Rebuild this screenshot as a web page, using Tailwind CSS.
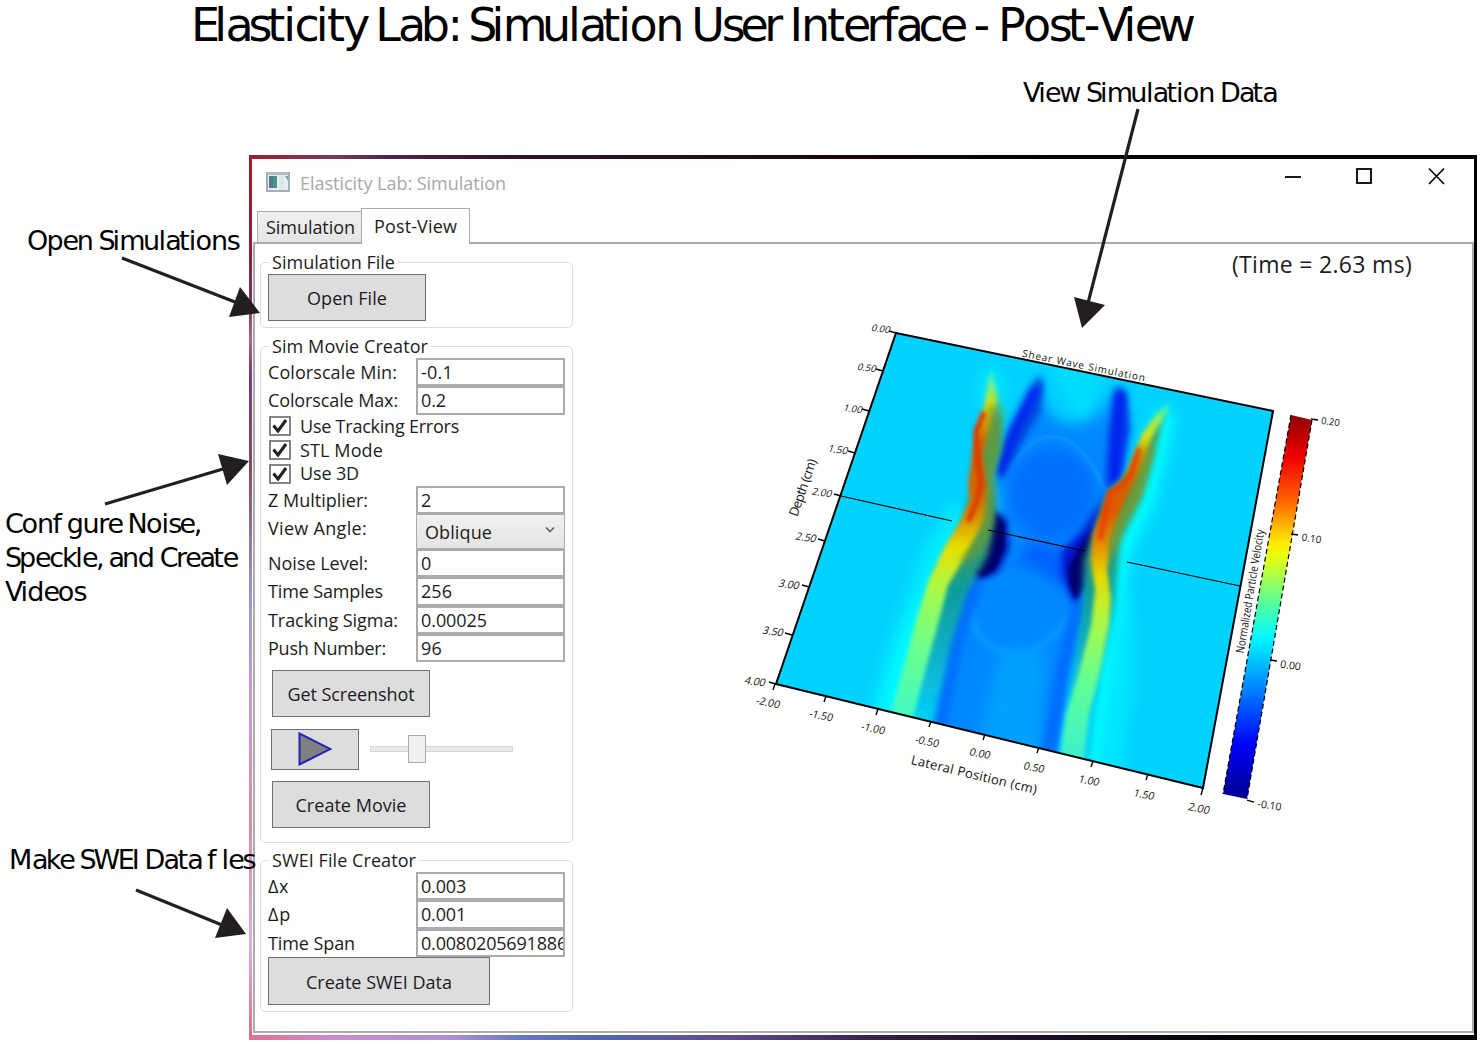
<!DOCTYPE html>
<html lang="en">
<head>
<meta charset="utf-8">
<title>Elasticity Lab: Simulation User Interface - Post-View</title>
<script src="https://cdn.jsdelivr.net/npm/@tailwindcss/browser@4"></script>
</head>
<body class="bg-white">
<main class="relative w-[1482px] h-[1045px] overflow-hidden bg-white font-['Open_Sans',sans-serif] text-[18px] text-[#1c1c1c]">

  <!-- Application window -->
  <section class="absolute left-[249px] top-[155px] w-[1228px] h-[885px] flex flex-col">
    <div class="h-1 shrink-0 bg-[linear-gradient(90deg,#a01c2c_0px,#7a3a5c_80px,#4c2650_140px,#35142c_250px,#20101c_450px,#1c0408_620px,#05070c_720px,#000_800px)]"></div>
    <div class="flex flex-1 min-h-0">
      <div class="w-[3px] shrink-0 bg-[linear-gradient(180deg,#a01c2c_0px,#8a2040_100px,#80305c_140px,#c0607c_180px,#7a3a78_215px,#8a4a60_310px,#9a9ad0_440px,#c89ad0_545px,#e08aa0_670px,#dcb0e0_785px,#e07090_870px)]"></div>
      <div class="flex-1 min-w-0 flex flex-col bg-[#fefefe]">

        <header class="h-[49px] shrink-0 flex items-center pl-[14px] pr-[28px]">
          <svg class="w-6 h-5 shrink-0 mt-[-4px]" viewBox="0 0 24 20">
            <rect x="1" y="1" width="22" height="18" fill="#e9edf2" stroke="#a3adb3" stroke-width="2"/>
            <rect x="1" y="0" width="22" height="3" fill="#b4bcc1"/>
            <rect x="3" y="4" width="8" height="12" fill="#4d9186"/>
            <rect x="3" y="4" width="4" height="12" fill="#4a7d93"/>
            <rect x="13" y="4" width="5" height="13" fill="#dfe5ee"/>
            <path d="M19 4h3v5z" fill="#7cab9c"/>
          </svg>
          <span data-w="206" class="ml-[10px] -mt-px text-[#a8a8a8] whitespace-nowrap">Elasticity Lab: Simulation</span>
          <svg class="ml-auto w-[162px] h-5 mt-[-15px]" viewBox="0 0 162 20" fill="none" stroke="#000" stroke-width="1.8">
            <path d="M1 11h16"/>
            <rect x="73" y="3" width="14" height="14"/>
            <path d="M145 2.500l15 15.500M160 2.500l-15 15.500" stroke-width="1.600"/>
          </svg>
        </header>

        <nav class="h-[34px] shrink-0 flex items-end pl-[5px]">
          <div class="w-[105px] h-[31px] border border-b-0 border-[#acacac] bg-gradient-to-b from-[#f0f0f0] to-[#e5e5e5] flex items-center pl-2"><span data-w="89" class="whitespace-nowrap">Simulation</span></div>
          <div class="relative z-10 w-[109px] h-9 -ml-px -mb-[2px] border-[1.5px] border-b-0 border-[#acacac] bg-white flex items-center pl-3"><span data-w="83" class="whitespace-nowrap">Post-View</span></div>
        </nav>

        <div class="flex-1 min-h-0 ml-px mb-[2px] border-2 border-[#acacac] bg-white flex">
          <aside class="w-[318px] shrink-0 pl-[5px] pt-[6px]">

            <fieldset class="w-[313px] h-[78px] border-[1.5px] border-[#d7dfe3] rounded-[5px] pl-[7px]">
              <legend class="ml-[1px] px-[3px] h-6 leading-6"><span data-w="123" class="whitespace-nowrap">Simulation File</span></legend>
              <button class="w-[158px] h-[47px] border-[1.5px] border-[#707070] bg-[#dddddd] flex items-center justify-center pt-0.5"><span data-w="80" class="whitespace-nowrap">Open File</span></button>
            </fieldset>

            <fieldset class="mt-[6px] w-[313px] h-[509px] border-[1.5px] border-[#d7dfe3] rounded-[5px] pl-[7px] pr-[6px]">
              <legend class="ml-[1px] px-[3px] h-6 leading-6"><span data-w="156" class="whitespace-nowrap">Sim Movie Creator</span></legend>
              <div class="grid grid-cols-[148px_149px] auto-rows-[28.3px] items-center leading-6">
                <span data-w="129" class="justify-self-start whitespace-nowrap">Colorscale Min:</span><div class="h-full border-2 border-[#ababab] bg-white px-[3px] overflow-hidden whitespace-nowrap"><span data-w="32">-0.1</span></div>
                <span data-w="130" class="justify-self-start whitespace-nowrap">Colorscale Max:</span><div class="h-full border-2 border-[#ababab] bg-white px-[3px] overflow-hidden whitespace-nowrap"><span data-w="25">0.2</span></div>
              </div>
              <div class="pl-px">
                <label class="h-[23.700px] flex items-center gap-[9px]"><svg class="w-[22px] h-5" viewBox="0 0 22 20"><rect x="1" y="1" width="20" height="18" fill="#fff" stroke="#707070" stroke-width="1.700"/><path d="M4.500 9.500l4.500 5.500 8-11" fill="none" stroke="#212121" stroke-width="3"/></svg><span data-w="159" class="whitespace-nowrap">Use Tracking Errors</span></label>
                <label class="h-[23.700px] flex items-center gap-[9px]"><svg class="w-[22px] h-5" viewBox="0 0 22 20"><rect x="1" y="1" width="20" height="18" fill="#fff" stroke="#707070" stroke-width="1.700"/><path d="M4.500 9.500l4.500 5.500 8-11" fill="none" stroke="#212121" stroke-width="3"/></svg><span data-w="83" class="whitespace-nowrap">STL Mode</span></label>
                <label class="h-[23.700px] flex items-center gap-[9px]"><svg class="w-[22px] h-5" viewBox="0 0 22 20"><rect x="1" y="1" width="20" height="18" fill="#fff" stroke="#707070" stroke-width="1.700"/><path d="M4.500 9.500l4.500 5.500 8-11" fill="none" stroke="#212121" stroke-width="3"/></svg><span data-w="59" class="whitespace-nowrap">Use 3D</span></label>
              </div>
              <div class="grid grid-cols-[148px_149px] grid-rows-[28.300px_35px_28.300px_28.300px_28.300px_28.300px] items-center leading-6">
                <span data-w="100" class="justify-self-start whitespace-nowrap">Z Multiplier:</span><div class="h-full border-2 border-[#ababab] bg-white px-[3px]"><span data-w="12">2</span></div>
                <span data-w="99" class="justify-self-start whitespace-nowrap -mt-[6px]">View Angle:</span><div class="h-full border-[1.5px] border-[#acacac] bg-gradient-to-b from-[#f0f0f0] to-[#e5e5e5] pl-2 pr-[9px] pt-0.5 flex items-center justify-between"><span data-w="67">Oblique</span><svg class="w-[10px] h-[8px] -mt-1" viewBox="0 0 10 8"><path d="M1 1.500l4 4 4-4" fill="none" stroke="#606060" stroke-width="1.600"/></svg></div>
                <span data-w="100" class="justify-self-start whitespace-nowrap">Noise Level:</span><div class="h-full border-2 border-[#ababab] bg-white px-[3px]"><span data-w="11">0</span></div>
                <span data-w="115" class="justify-self-start whitespace-nowrap">Time Samples</span><div class="h-full border-2 border-[#ababab] bg-white px-[3px]"><span data-w="31">256</span></div>
                <span data-w="130" class="justify-self-start whitespace-nowrap">Tracking Sigma:</span><div class="h-full border-2 border-[#ababab] bg-white px-[3px]"><span data-w="66">0.00025</span></div>
                <span data-w="118" class="justify-self-start whitespace-nowrap">Push Number:</span><div class="h-full border-2 border-[#ababab] bg-white px-[3px]"><span data-w="21">96</span></div>
              </div>
              <div class="pl-1 pt-2">
                <button class="w-[158px] h-[47px] border-[1.5px] border-[#707070] bg-[#dddddd] flex items-center justify-center pt-0.5"><span data-w="127" class="whitespace-nowrap">Get Screenshot</span></button>
                <div class="mt-3 -ml-px flex items-center gap-[11px]">
                  <button class="w-[88px] h-[41px] border-[1.5px] border-[#707070] bg-[#dddddd] flex items-center justify-center"><svg class="w-[34px] h-[34px] -mt-0.5" viewBox="0 0 34 34"><path d="M1.500 1.500v31l31-15.500z" fill="#808080" stroke="#2525b5" stroke-width="2"/></svg></button>
                  <div class="relative -top-px w-[143px] h-[6px] border border-[#d6d6d6] bg-[#e7eaea]"><div class="absolute left-[37px] -top-[12px] w-[18px] h-7 border-[1.5px] border-[#acacac] bg-[#f0f0f0]"></div></div>
                </div>
                <button class="mt-[11px] w-[158px] h-[47px] border-[1.5px] border-[#707070] bg-[#dddddd] flex items-center justify-center pt-0.5"><span data-w="111" class="whitespace-nowrap">Create Movie</span></button>
              </div>
            </fieldset>

            <fieldset class="mt-[5px] w-[313px] h-[164px] border-[1.5px] border-[#d7dfe3] rounded-[5px] pl-[7px] pr-[6px]">
              <legend class="ml-[1px] px-[3px] h-6 leading-6"><span data-w="144" class="whitespace-nowrap">SWEI File Creator</span></legend>
              <div class="grid grid-cols-[148px_149px] auto-rows-[28.300px] items-center leading-6">
                <span data-w="21" class="justify-self-start whitespace-nowrap">Δx</span><div class="h-full border-2 border-[#ababab] bg-white px-[3px]"><span data-w="45">0.003</span></div>
                <span data-w="23" class="justify-self-start whitespace-nowrap">Δp</span><div class="h-full border-2 border-[#ababab] bg-white px-[3px]"><span data-w="45">0.001</span></div>
                <span data-w="87" class="justify-self-start whitespace-nowrap">Time Span</span><div class="h-full border-2 border-[#ababab] bg-white pl-[3px] overflow-hidden whitespace-nowrap"><span data-w="146">0.0080205691886</span></div>
              </div>
              <button class="w-[222px] h-[48px] border-[1.5px] border-[#707070] bg-[#dddddd] flex items-center justify-center pt-[3px]"><span data-w="146" class="whitespace-nowrap">Create SWEI Data</span></button>
            </fieldset>
          </aside>

          <div class="flex-1 min-w-0 flex flex-col">
            <div class="h-11 flex items-center justify-end pr-[60px] pb-[3px]"><span data-w="180" class="text-[23px] whitespace-nowrap">(Time = 2.63 ms)</span></div>

            <!-- Shear wave surface plot -->
            <svg class="w-[660px] h-[540px] ml-[127px]" viewBox="700 288 660 540" font-family="Open Sans, sans-serif" fill="#111">
              <defs>
                <clipPath id="surf"><path d="M896 333L1273 411L1203 788L776 684Z"/></clipPath>
                <filter id="b1" filterUnits="userSpaceOnUse" x="740" y="300" width="570" height="520"><feGaussianBlur stdDeviation="1.300"/></filter>
                <filter id="b2" filterUnits="userSpaceOnUse" x="740" y="300" width="570" height="520"><feGaussianBlur stdDeviation="2"/></filter>
                <filter id="b3" filterUnits="userSpaceOnUse" x="740" y="300" width="570" height="520"><feGaussianBlur stdDeviation="3.500"/></filter>
                <filter id="b6" filterUnits="userSpaceOnUse" x="740" y="300" width="570" height="520"><feGaussianBlur stdDeviation="7"/></filter>
                <linearGradient id="ridgeL" gradientUnits="userSpaceOnUse" x1="0" y1="362" x2="0" y2="720">
                  <stop offset="0" stop-color="#20ffe0" stop-opacity=".2"/><stop offset=".06" stop-color="#90f070" stop-opacity=".8"/><stop offset=".12" stop-color="#d8e010"/><stop offset=".17" stop-color="#d8a000"/><stop offset=".22" stop-color="#d06800"/><stop offset=".36" stop-color="#d06800"/><stop offset=".43" stop-color="#d89000"/><stop offset=".52" stop-color="#e8e000"/><stop offset=".62" stop-color="#b0f840"/><stop offset=".78" stop-color="#70ff88"/><stop offset="1" stop-color="#40f8c8"/>
                </linearGradient>
                <linearGradient id="ridgeR" gradientUnits="userSpaceOnUse" x1="0" y1="400" x2="0" y2="764">
                  <stop offset="0" stop-color="#20ffe0" stop-opacity=".4"/><stop offset=".05" stop-color="#90f060"/><stop offset=".1" stop-color="#d8e010"/><stop offset=".16" stop-color="#d89000"/><stop offset=".23" stop-color="#d06800"/><stop offset=".31" stop-color="#e05800"/><stop offset=".4" stop-color="#e89000"/><stop offset=".48" stop-color="#e8d800"/><stop offset=".6" stop-color="#b0f840"/><stop offset=".78" stop-color="#60ff98"/><stop offset="1" stop-color="#38f0d0"/>
                </linearGradient>
                <linearGradient id="shade" gradientUnits="userSpaceOnUse" x1="0" y1="390" x2="0" y2="720">
                  <stop offset="0" stop-color="#30e0c0" stop-opacity=".5"/><stop offset=".1" stop-color="#509a50"/><stop offset=".45" stop-color="#409860"/><stop offset=".6" stop-color="#109c98"/><stop offset=".8" stop-color="#10b0c8"/><stop offset="1" stop-color="#00d0f8"/>
                </linearGradient>
                <linearGradient id="bar" x1="0" y1="0" x2="0" y2="1">
                  <stop offset="0" stop-color="#900000"/><stop offset=".11" stop-color="#f00000"/><stop offset=".22" stop-color="#ff6000"/><stop offset=".33" stop-color="#ffe800"/><stop offset=".37" stop-color="#e8ff10"/><stop offset=".48" stop-color="#60ff90"/><stop offset=".58" stop-color="#00f8ff"/><stop offset=".68" stop-color="#00a0ff"/><stop offset=".77" stop-color="#0050ff"/><stop offset=".86" stop-color="#0000f8"/><stop offset="1" stop-color="#000090"/>
                </linearGradient>
              </defs>

              <g clip-path="url(#surf)">
                <rect x="770" y="325" width="510" height="470" fill="#00d2ff"/>
                <!-- outer halos -->
                <path d="M990 372L994 420" fill="none" stroke="#00f4ff" stroke-width="20" filter="url(#b6)" opacity=".8"/>
                <path d="M964 510L936 555L905 640L878 730" fill="none" stroke="#00f2ff" stroke-width="26" filter="url(#b6)" opacity=".8"/>
                <path d="M945 590L918 645L895 730" fill="none" stroke="#00ffff" stroke-width="30" filter="url(#b6)"/>
                <path d="M1166 412L1145 500L1120 550L1112 620L1090 780" fill="none" stroke="#00ffff" stroke-width="20" filter="url(#b6)"/>
                <path d="M1118 600L1122 680L1108 790" fill="none" stroke="#00ecff" stroke-width="22" filter="url(#b6)" opacity=".8"/>
                <path d="M1045 350L1082 425L1110 360Z" fill="#00dcff" filter="url(#b3)"/>
                <!-- trough between the two wave fronts -->
                <path d="M1036 385L1050 415Q1080 435 1105 408L1118 385L1128 420L1112 500L1088 560L1084 620L1066 690L1054 790L920 755L945 665L968 590L1000 540L997 478L1012 425Z" fill="#0088ff" filter="url(#b6)"/>
                <ellipse cx="1052" cy="494" rx="44" ry="46" fill="#0070ff" filter="url(#b6)"/>
                <path d="M1000 482Q1040 412 1080 450Q1096 468 1106 492" fill="none" stroke="#0a94ff" stroke-width="4" filter="url(#b2)"/>
                <path d="M1030 540L1072 552L1066 590L1010 575Z" fill="#0064ff" filter="url(#b6)"/>
                <ellipse cx="1018" cy="610" rx="42" ry="45" fill="#0088ff" filter="url(#b6)"/>
                <path d="M968 600Q970 645 1015 655Q1050 650 1068 615" fill="none" stroke="#0a9cff" stroke-width="8" filter="url(#b3)" opacity=".7"/>
                <path d="M1000 650L975 755L1040 775L1045 650Z" fill="#00a0ff" filter="url(#b6)"/>
                <path d="M975 580L955 640L934 740" fill="none" stroke="#006cff" stroke-width="17" filter="url(#b3)"/>
                <path d="M1082 595L1063 670L1046 770" fill="none" stroke="#006cff" stroke-width="14" filter="url(#b3)"/>
                <!-- upper troughs -->
                <path d="M1038 374L1028 400L1005 440L996 486L1008 468L1040 412L1044 383Z" fill="#0048e0" filter="url(#b3)"/>
                <path d="M1036 387L1016 428L999 474" fill="none" stroke="#0020f0" stroke-width="9" filter="url(#b3)"/>
                <path d="M1117 385L1108 440L1106 492L1122 474L1130 430L1126 393Z" fill="#0040e8" filter="url(#b3)"/>
                <path d="M1120 392L1114 484" fill="none" stroke="#0020f0" stroke-width="10" filter="url(#b3)"/>
                <!-- dark pockets -->
                <path d="M990 480L992 510L1006 518L1009 548L998 572L978 580L965 570L985 530Z" fill="#0008b0" filter="url(#b3)"/>
                <path d="M994 512L1005 524L1004 550L994 571L982 577L972 572L988 545Z" fill="#00006c" filter="url(#b2)"/>
                <path d="M1108 492L1084 528L1061 552L1062 575L1073 603L1086 590L1095 540Z" fill="#0018d0" filter="url(#b3)"/>
                <path d="M1094 528L1082 543L1068 566L1069 585L1076 600L1087 582Z" fill="#000070" filter="url(#b2)"/>
                <!-- left front -->
                <path d="M993 378L1004 410L1001 450L991 478L995 520L988 555L968 590L952 640L932 730L908 725L936 590L955 545L975 480Z" fill="url(#shade)" filter="url(#b3)"/>
                <path d="M991 362L984 408L976 430L972 455L968 485L970 500L960 522L944 548L928 582L915 625L903 670L887 725L910 730L924 675L937 628L948 585L968 552L985 520L988 490L983 455L991 425L997 400Z" fill="url(#ridgeL)" filter="url(#b2)"/>
                <path d="M993 405L993 440L990 475L991 505L983 538L963 562" fill="none" stroke="#6f9c30" stroke-width="8" opacity=".75" filter="url(#b3)"/>
                <path d="M984 412L976 432L978 462L981 485L976 503L968 522" fill="none" stroke="#e03000" stroke-width="5" filter="url(#b2)"/>
                <!-- right front -->
                <path d="M1166 405L1155 450L1140 500L1120 540L1114 605L1100 670L1088 775L1060 765L1082 610L1084 560L1104 500L1130 470Z" fill="url(#shade)" filter="url(#b3)"/>
                <path d="M1172 400L1158 412L1142 434L1134 456L1123 480L1109 491L1103 508L1093 535L1091 560L1095 590L1091 625L1078 675L1066 715L1058 770L1082 775L1089 715L1100 672L1109 625L1111 598L1107 570L1112 535L1126 500L1142 468L1152 436L1168 410Z" fill="url(#ridgeR)" filter="url(#b2)"/>
                <path d="M1150 448L1138 492L1119 525L1111 550" fill="none" stroke="#80a028" stroke-width="8" opacity=".85" filter="url(#b3)"/>
                <path d="M1139 448L1131 475L1122 485L1110 493L1105 515L1100 540" fill="none" stroke="#e84000" stroke-width="5" filter="url(#b2)"/>
              </g>

              <g fill="none" stroke="#000">
                <path d="M896 333L1273 411L1203 788L776 684Z" stroke-width="2"/>
                <path d="M841 496L952 521M988 530L1085 551M1127 562L1240 586" stroke-width="1.200"/>
                <path d="M896 333l-7-2M883 371l-7-2M869 411l-7-2M855 453l-7-2M841 496l-7-2M825 541l-7-2M809 587l-7-2M792 635l-7-2M776 684l-7-2M775 684l-2 6M826 696l-2 6M878 709l-2 6M931 721l-2 6M985 734l-2 6M1039 747l-2 6M1093 761l-2 6M1148 774l-2 6M1203 788l-2 7" stroke-width="1.400"/>
              </g>
              <g font-size="10.500" text-anchor="middle">
                <text transform="translate(880 332) rotate(8) skewX(-12)" font-size="9.500">0.00</text>
                <text transform="translate(866 371) rotate(8) skewX(-12)" font-size="9.500">0.50</text>
                <text transform="translate(852 412) rotate(8) skewX(-12)" font-size="9.500">1.00</text>
                <text transform="translate(837 453) rotate(8) skewX(-12)" font-size="10">1.50</text>
                <text transform="translate(821 496) rotate(8) skewX(-12)" font-size="10">2.00</text>
                <text transform="translate(805 541) rotate(8) skewX(-12)">2.50</text>
                <text transform="translate(788 588) rotate(8) skewX(-12)">3.00</text>
                <text transform="translate(772 635) rotate(8) skewX(-12)">3.50</text>
                <text transform="translate(754 685) rotate(8) skewX(-12)">4.00</text>
                <text transform="translate(767 706) rotate(11) skewX(-8)">-2.00</text>
                <text transform="translate(820 719) rotate(11) skewX(-8)">-1.50</text>
                <text transform="translate(872 732) rotate(11) skewX(-8)">-1.00</text>
                <text transform="translate(926 745) rotate(11) skewX(-8)">-0.50</text>
                <text transform="translate(979 757) rotate(11) skewX(-8)">0.00</text>
                <text transform="translate(1033 771) rotate(11) skewX(-8)">0.50</text>
                <text transform="translate(1088 784) rotate(11) skewX(-8)">1.00</text>
                <text transform="translate(1143 798) rotate(11) skewX(-8)">1.50</text>
                <text transform="translate(1198 812) rotate(11) skewX(-8)" font-size="11">2.00</text>
                <text transform="translate(973 779) rotate(13.500)" font-size="13" textLength="129">Lateral Position (cm)</text>
                <text transform="translate(1083 369) rotate(11.500)" font-size="10" textLength="125">Shear Wave Simulation</text>
                <text transform="translate(807 489) rotate(-71)" font-size="13" textLength="60">Depth (cm)</text>
                <text transform="translate(1254 592) rotate(-80.500)" font-size="11.500" textLength="125" lengthAdjust="spacingAndGlyphs">Normalized Particle Velocity</text>
                <text transform="translate(1330 425) rotate(8)" font-size="9.500">0.20</text>
                <text transform="translate(1311 542) rotate(8)" font-size="10">0.10</text>
                <text transform="translate(1290 669) rotate(8)">0.00</text>
                <text transform="translate(1269 809) rotate(8)">-0.10</text>
              </g>
              <path d="M1291 415L1312 420L1247 799L1223 794Z" fill="url(#bar)"/>
              <path d="M1291 415L1223 794M1312 420L1247 799" stroke="#000" stroke-width="1.200" stroke-dasharray="5 3" fill="none"/>
              <path d="M1311 419l7 1M1291 534l7 1M1270 660l7 1M1247 800l7 2" stroke="#000" stroke-width="1.300"/>
            </svg>
          </div>
        </div>
      </div>
      <div class="w-[3px] shrink-0 bg-black"></div>
    </div>
    <div class="h-[5px] shrink-0 bg-[linear-gradient(90deg,#e07090_0px,#c88ccc_80px,#b090d4_200px,#6a78c4_270px,#5068b4_340px,#604a90_480px,#301c40_650px,#140a1c_850px,#000_1050px)]"></div>
  </section>

  <!-- Callouts around the window -->
  <svg class="absolute inset-0 w-[1482px] h-[1045px]" viewBox="0 0 1482 1045" font-family="DejaVu Sans, sans-serif" font-size="27" fill="#000">
    <text data-set="1002" x="191" y="41" font-size="46">Elasticity Lab: Simulation User Interface - Post-View</text>
    <text data-set="253" x="1023" y="102">View Simulation Data</text>
    <text data-set="211" x="27" y="250">Open Simulations</text>
    <text data-set="195" x="5" y="533">Conf gure Noise,</text>
    <text data-set="232" x="5" y="567">Speckle, and Create</text>
    <text data-set="80" x="5" y="601">Videos</text>
    <text data-set="245" x="9" y="869">Make SWEI Data f les</text>
    <g stroke="#231f20" stroke-width="3.200">
      <path d="M1138 109L1088 303M122 258L235 302M105 504L223 469M136 890L222 925"/>
    </g>
    <g fill="#231f20">
      <path d="M1082 328L1074 297L1105 305Z"/>
      <path d="M260 313L240 287L229 317Z"/>
      <path d="M249 461L218 454L227 485Z"/>
      <path d="M246 934L227 908L215 938Z"/>
    </g>
  </svg>
</main>
<script>
  // Advance widths (1/1000 em) for the callout lettering.
  var ADV = {' ':212,E:492,l:240,a:486,s:400,t:340,i:238,c:452,y:475,L:480,b:569,':':230,S:493,m:834,u:551,o:549,n:555,U:647,e:501,r:327,I:239,f:292,'-':307,P:532,V:540,w:736,D:666,O:689,p:569,C:580,g:559,N:658,k:469,',':220,d:564,M:804,W:846};
  document.querySelectorAll('[data-set]').forEach(function (el) {
    var chars = el.textContent.split('');
    var total = chars.reduce(function (s, c) { return s + ADV[c]; }, 0);
    var x = Number(el.getAttribute('x'));
    var unit = Number(el.dataset.set) / total;
    el.setAttribute('x', chars.map(function (c) { var at = x; x += ADV[c] * unit; return at.toFixed(1); }).join(' '));
  });

  // Tracks each caption to its allotted width.
  function fit() {
    document.querySelectorAll('[data-w]').forEach(function (el) {
      el.style.letterSpacing = '0px';
      var range = document.createRange();
      range.selectNodeContents(el);
      var natural = range.getBoundingClientRect().width;
      el.style.letterSpacing = ((Number(el.dataset.w) - natural) / el.textContent.length).toFixed(3) + 'px';
    });
  }
  fit();
  window.addEventListener('load', fit);
  document.fonts.ready.then(fit);
  requestAnimationFrame(fit);
  setTimeout(fit, 60);
</script>
</body>
</html>
